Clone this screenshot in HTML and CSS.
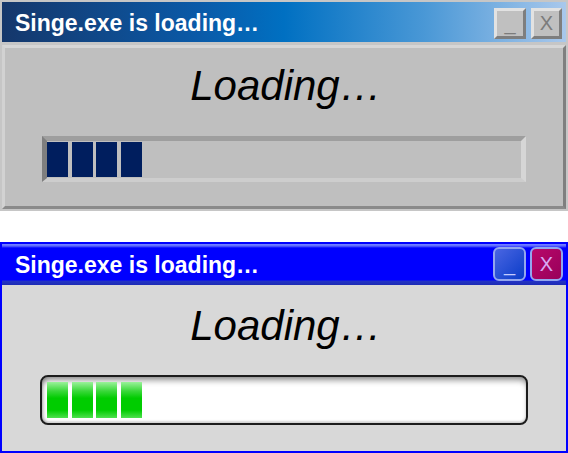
FILE: index.html
```html
<!DOCTYPE html>
<html lang="en">
<head>
  <meta charset="UTF-8">
  <title>Singe.exe loading</title>
  <link rel="stylesheet" href="styles.css">
</head>
<body>
  <div class="win classic">
    <div class="titlebar">
      <span class="title">Singe.exe is loading…</span>
      <div class="btns">
        <span class="btn">_</span>
        <span class="btn">X</span>
      </div>
    </div>
    <div class="content">
      <div class="label">Loading…</div>
      <div class="bar">
        <span class="block"></span><span class="block"></span><span class="block"></span><span class="block"></span>
      </div>
    </div>
  </div>

  <div class="win modern">
    <div class="titlebar">
      <span class="title">Singe.exe is loading…</span>
      <div class="btns">
        <span class="btn min">_</span>
        <span class="btn close">X</span>
      </div>
    </div>
    <div class="content">
      <div class="label">Loading…</div>
      <div class="bar">
        <span class="block"></span><span class="block"></span><span class="block"></span><span class="block"></span>
      </div>
    </div>
  </div>
</body>
</html>
```

FILE: styles.css
```css
body { margin: 0; background: #fff; font-family: "Liberation Sans", Arial, sans-serif; }

.win { width: 568px; box-sizing: border-box; }
.titlebar { display: flex; align-items: flex-start; justify-content: space-between; color: #fff; }
.title { font-weight: bold; font-size: 23px; line-height: 23px; padding: 10px 0 0 13px; }
.btns { display: flex; }
.btn { box-sizing: border-box; display: flex; align-items: center; justify-content: center; font-size: 20px; }
.content { display: flex; flex-direction: column; align-items: center; box-sizing: border-box; }
.label { font-style: italic; font-size: 42px; line-height: 42px; color: #000; margin-left: 4px; }
.bar { display: flex; box-sizing: border-box; }
.block { display: block; width: 21px; margin-right: 3.5px; }

/* classic grey window */
.classic { background: #c6c6c6; padding: 2px; height: 211px; }
.classic .titlebar { height: 40px; background: linear-gradient(to right, #15376b 0%, #0a5aa8 35%, #0070c2 50%, #4a98d6 75%, #a9c8ec 100%); }
.classic .btns { gap: 5px; padding: 6px 4px 0 0; }
.classic .btn {
  width: 32px; height: 31px; background: #c0c0c0; color: #7c7c7c;
  border: 3px solid; border-color: #e2e2e2 #7e7e7e #7e7e7e #e2e2e2;
}
.classic .btn:last-child { width: 31px; }
.classic .content {
  margin-top: 3px; height: 164px; background: #bfbfbf;
  border: 3px solid; border-color: #d6d6d6 #7f7f7f #8a8a8a #d2d2d2;
  padding-top: 17px;
}
.classic .bar {
  margin-top: 29px; width: 484px; height: 46px; padding: 1px 0;
  border-style: solid; border-width: 5px 5px 4px 5px;
  border-color: #9e9e9e #d6d6d6 #cdcdcd #7f7f7f; background: #bfbfbf;
}
.classic .block { background: #001e5e; }

/* blue window */
.modern { margin-top: 31px; border: 2px solid #0000ff; height: 211px; }
.modern .titlebar {
  height: 41px;
  background: linear-gradient(to bottom, #7a86ff 0, #5a66ff 2px, #0000ff 4px, #0000ff 36px, #2434c4 37px, #1c2ab6 41px);
}
.modern .btns { gap: 4px; padding: 3px 3px 0 0; }
.modern .btn { width: 33px; height: 34px; border: 2px solid #93a6ee; border-radius: 6px; }
.modern .min { background: linear-gradient(135deg, #4a66e2, #0a3cc8); color: #c4ccff; }
.modern .close { background: linear-gradient(135deg, #b8086a, #98005a); color: #d8a8f4; }
.modern .content { height: 166px; background: #d8d8d8; padding-top: 20px; }
.modern .bar {
  margin-top: 28px; width: 488px; height: 50px; padding: 5px;
  border: 2px solid #1c1c1c; border-radius: 8px; background: #fff;
  box-shadow: inset 0 6px 6px -3px rgba(0,0,0,0.45), inset 3px 0 4px -2px rgba(0,0,0,0.25), inset 0 -2px 2px rgba(0,0,0,0.15);
}
.modern .block { height: 36px; background: linear-gradient(to bottom, #9af29a 0%, #3ad83a 25%, #00cc00 45%, #00cc00 78%, #4ee04e 100%); }
```
